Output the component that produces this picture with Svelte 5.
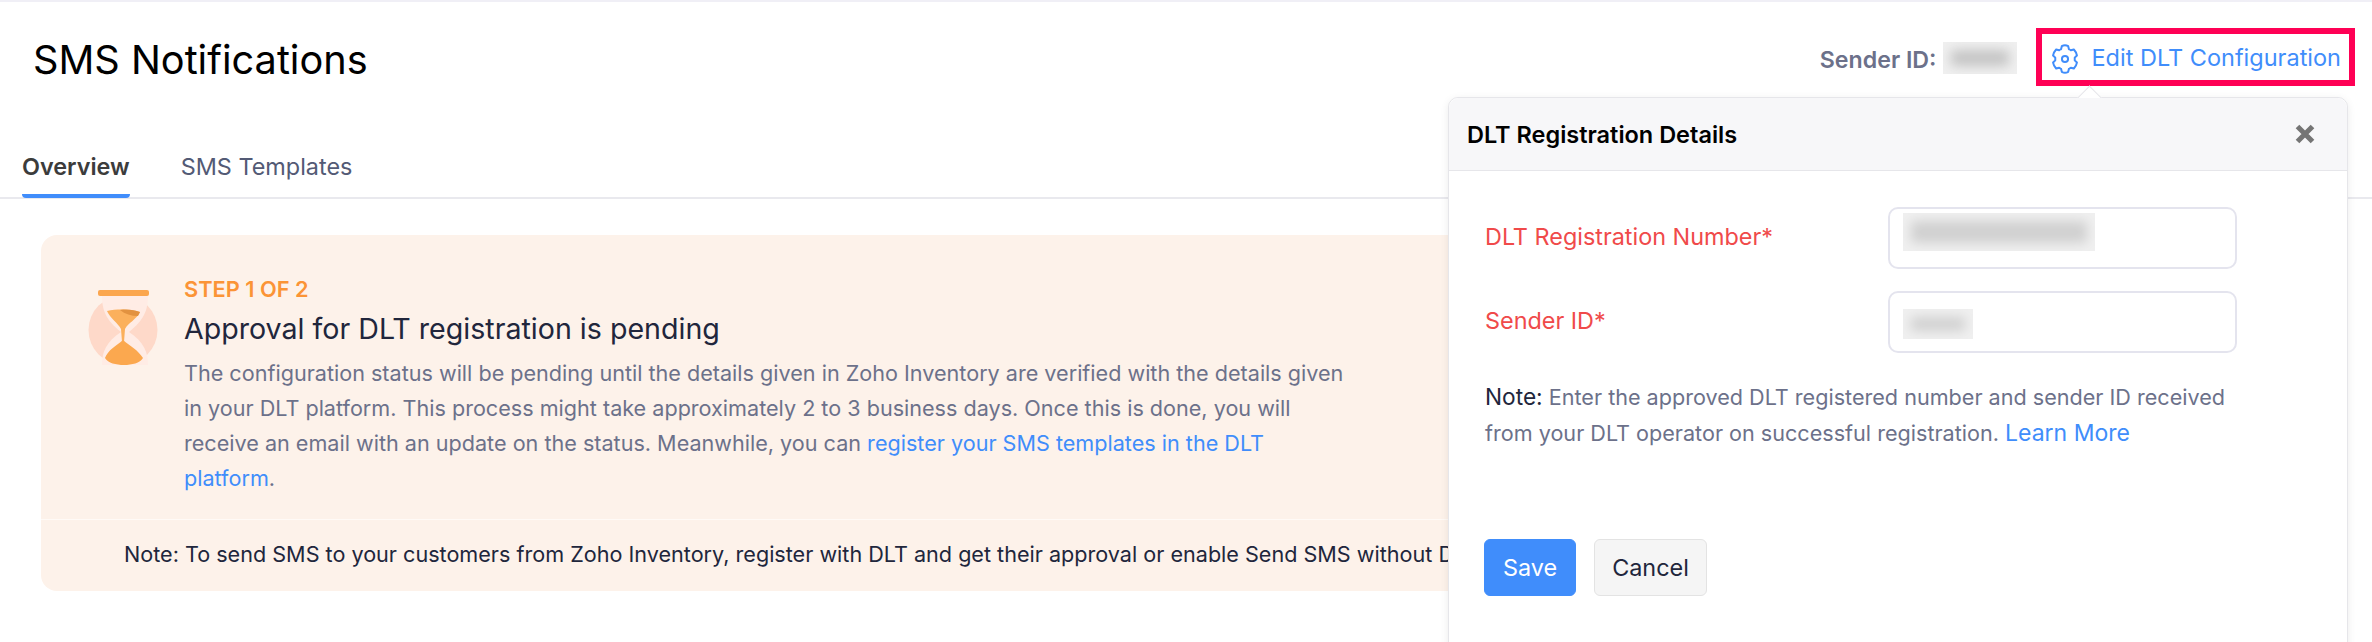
<script>
	const tabs = ['Overview', 'SMS Templates'];
</script>

<div class="page">
	<header class="top">
		<h1>SMS Notifications</h1>
		<div class="actions">
			<span class="sender">Sender ID:</span>
			<span class="redacted sender-blur"></span>
			<a class="edit" href="#edit">
				<svg viewBox="0 0 24 26" fill="none" stroke="currentColor" stroke-width="1.6" stroke-linejoin="round">
					<path d="M9.4 2.6c1.6-1 3.6-1 5.2 0l.6 2.4c.5.3 1 .5 1.500.9l2.500-.6c1.200 1.300 2.200 3.100 2.500 4.800l-1.800 1.800v2.200l1.800 1.800c-.3 1.700-1.300 3.500-2.500 4.800l-2.500-.6c-.5.4-1 .6-1.500.9l-.6 2.400c-1.600 1-3.600 1-5.200 0l-.6-2.400c-.5-.3-1-.5-1.500-.9l-2.500.6c-1.200-1.300-2.200-3.100-2.500-4.800l1.800-1.800v-2.200l-1.800-1.800c.3-1.700 1.300-3.500 2.500-4.800l2.500.6c.5-.4 1-.6 1.500-.9z" />
					<circle cx="12" cy="13" r="2.500" />
				</svg>
				Edit DLT Configuration
			</a>
		</div>
	</header>

	<nav class="tabs">
		{#each tabs as tab, i}
			<span class="tab" class:active={i === 0}>{tab}</span>
		{/each}
	</nav>

	<section class="banner">
		<div class="banner-main">
			<svg class="glass" viewBox="0 0 70 76">
				<circle cx="35" cy="40" r="34.500" fill="#fed9c9" />
				<path d="M14 6h46c0 14-4 24-19 36 15 10 19 20 19 33H14c0-13 4-23 19-33C18 30 14 20 14 6z" fill="#ffece5" />
				<rect x="10" y="0" width="51" height="6" rx="2" fill="#fba64e" />
				<path d="M19 21c10-2 23-2 33 1-3 7-12 11-15 17l-1 13h-2l-1-13c-3-6-11-11-14-18z" fill="#fbb05c" />
				<path d="M32 20c8-1 14 0 20 2l-2 4c-7 0-13-2-18-6z" fill="#e29240" />
				<path d="M35 50c-7 6-15 10-18 18 3 5 11 7 19 7s16-2 19-7c-5-8-13-12-20-18z" fill="#fba84f" />
			</svg>
			<div class="banner-copy">
				<div class="step">STEP 1 OF 2</div>
				<h2>Approval for DLT registration is pending</h2>
				<p>
					The configuration status will be pending until the details given in Zoho Inventory are verified with the details given
					in your DLT platform. This process might take approximately 2 to 3 business days. Once this is done, you will
					receive an email with an update on the status. Meanwhile, you can <a href="#dlt">register your SMS templates in the DLT platform</a>.
				</p>
			</div>
		</div>
		<div class="banner-note">
			Note: To send SMS to your customers from Zoho Inventory, register with DLT and get their approval or enable Send SMS without DLT.
		</div>
	</section>

	<aside class="popover">
		<span class="arrow"></span>
		<div class="pop-head">
			<strong>DLT Registration Details</strong>
			<svg class="close" viewBox="0 0 16 16">
				<path d="M3 3l10 10M13 3L3 13" stroke="#757575" stroke-width="3.400" />
			</svg>
		</div>
		<div class="pop-body">
			<div class="field">
				<label for="reg">DLT Registration Number*</label>
				<div id="reg" class="input"><span class="redacted reg-blur"></span></div>
			</div>
			<div class="field">
				<label for="sid">Sender ID*</label>
				<div id="sid" class="input"><span class="redacted sid-blur"></span></div>
			</div>
			<p class="note">
				<span class="note-key">Note:</span> Enter the approved DLT registered number and sender ID received
				from your DLT operator on successful registration. <a href="#more">Learn More</a>
			</p>
			<div class="buttons">
				<button class="save">Save</button>
				<button class="cancel">Cancel</button>
			</div>
		</div>
	</aside>
</div>

<style>
	:global(body) {
		margin: 0;
		background: #fff;
		overflow: hidden;
	}

	.page {
		position: relative;
		height: 642px;
		overflow: hidden;
		border-top: 2px solid #f0eff6;
		box-sizing: border-box;
		font-family: Inter, 'Liberation Sans', sans-serif;
		color: #21263c;
	}

	a {
		color: #408dfb;
		text-decoration: none;
	}

	.top {
		display: flex;
		align-items: center;
		justify-content: space-between;
		height: 114px;
		padding: 0 17px 0 33px;
		box-sizing: border-box;
	}

	h1 {
		margin: 2px 0 0;
		font-size: 39.700px;
		font-weight: 400;
		color: #000;
	}

	.actions {
		display: flex;
		align-items: center;
		margin-top: -4px;
	}

	.sender {
		margin-top: 5px;
		font-size: 23.200px;
		font-weight: 600;
		color: #6c718a;
	}

	.redacted {
		display: block;
		background: #c4c4c4;
		box-shadow: inset 0 0 12px 8px #f0f0f0;
	}

	.sender-blur {
		width: 74px;
		height: 32px;
		margin: 2px 19px 0 7px;
	}

	.edit {
		display: flex;
		align-items: center;
		gap: 11px;
		height: 58px;
		padding: 0 8px;
		box-sizing: border-box;
		border: 6px solid #ff0055;
		font-size: 23.500px;
	}

	.edit svg {
		width: 30px;
		height: 32px;
		margin-top: 4px;
	}

	.tabs {
		display: flex;
		gap: 51px;
		height: 83px;
		padding: 0 22px;
		border-bottom: 2px solid #e9e9ee;
		box-sizing: border-box;
		align-items: flex-end;
	}

	.tab {
		padding-bottom: 11px;
		font-size: 23.400px;
		line-height: 33px;
		border-bottom: 4px solid transparent;
		margin-bottom: -1px;
		color: #535a75;
	}

	.tab.active {
		font-weight: 600;
		color: #3c3c3c;
		border-bottom-color: #408dfb;
		border-radius: 4px;
	}

	.banner {
		margin: 36px 60px 0 41px;
		background: #fdf2ea;
		border-radius: 16px;
		height: 356px;
		overflow: hidden;
	}

	.banner-main {
		display: flex;
		height: 285px;
		padding: 55px 0 0 47px;
		box-sizing: border-box;
		gap: 26px;
		border-bottom: 1px solid #fffaf6;
	}

	.glass {
		flex: none;
		width: 70px;
		height: 76px;
	}

	.banner-copy {
		margin-top: -13px;
	}

	.step {
		font-size: 21.800px;
		font-weight: 600;
		line-height: 24px;
		color: #fb9436;
	}

	h2 {
		margin: 10px 0 0;
		font-size: 28.600px;
		font-weight: 400;
		line-height: 36px;
		color: #21263c;
	}

	.banner-copy p {
		margin: 9px 0 0;
		width: 1175px;
		font-size: 21.600px;
		line-height: 35px;
		color: #6c718a;
	}

	.banner-note {
		padding: 19px 0 0 83px;
		font-size: 21.600px;
		line-height: 30px;
		white-space: nowrap;
	}

	.popover {
		position: absolute;
		left: 1448px;
		top: 95px;
		width: 900px;
		height: 560px;
		box-sizing: border-box;
		background: #fff;
		border: 1px solid #e6e6ea;
		border-radius: 10px 10px 0 0;
		box-shadow: 0 2px 8px rgb(0 0 0 / 0.08);
	}

	.arrow {
		position: absolute;
		left: 632px;
		top: -9px;
		width: 16px;
		height: 16px;
		background: #fff;
		border: 1px solid #e6e6ea;
		border-width: 1px 0 0 1px;
		transform: rotate(45deg);
	}

	.pop-head {
		position: relative;
		display: flex;
		align-items: center;
		justify-content: space-between;
		height: 72px;
		padding: 0 30px 0 18px;
		background: #f7f7f9;
		border-bottom: 1px solid #e6e6ea;
		border-radius: 10px 10px 0 0;
		font-size: 23.500px;
		color: #000;
	}

	.pop-head strong {
		font-weight: 600;
	}

	.close {
		width: 24px;
		height: 24px;
	}

	.pop-body {
		padding: 36px 36px;
	}

	.field {
		display: flex;
		align-items: center;
		margin-bottom: 22px;
	}

	label {
		width: 403px;
		font-size: 23.400px;
		color: #f04a4a;
		margin-top: -4px;
	}

	.input {
		width: 349px;
		height: 62px;
		padding: 4px 13px;
		box-sizing: border-box;
		border: 2px solid #e4e4ee;
		border-radius: 10px;
	}

	.reg-blur {
		width: 192px;
		height: 38px;
		background: #d0d0d0;
	}

	.sid-blur {
		width: 70px;
		height: 30px;
		margin-top: 12px;
		background: #d0d0d0;
	}

	.note {
		width: 760px;
		margin: 0;
		padding-top: 4px;
		font-size: 21.600px;
		line-height: 36px;
		color: #6c718a;
	}

	.note-key {
		font-size: 22.700px;
		color: #21263c;
	}

	.note a {
		font-size: 23px;
	}

	.buttons {
		display: flex;
		gap: 18px;
		margin: 88px 0 0 -1px;
	}

	button {
		height: 57px;
		padding: 0 18px;
		border-radius: 6px;
		font-family: inherit;
		font-size: 23.400px;
	}

	.save {
		background: #408dfb;
		border: 1px solid #408dfb;
		color: #fff;
	}

	.cancel {
		padding: 0 17px;
		background: #f5f5f5;
		border: 1px solid #e3e3e3;
		color: #21263c;
	}
</style>
